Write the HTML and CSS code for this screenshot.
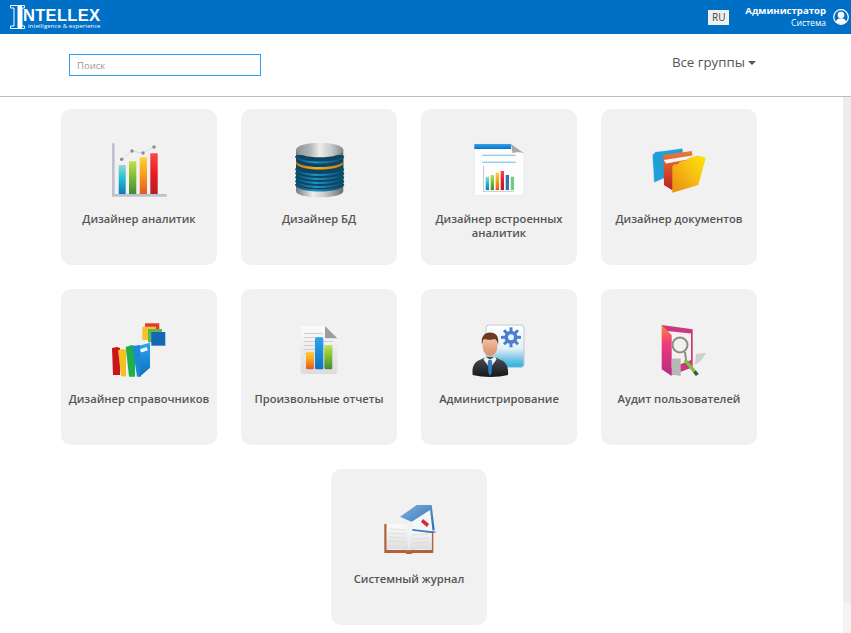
FILE: index.html
```html
<!DOCTYPE html>
<html lang="ru">
<head>
<meta charset="utf-8">
<title>Intellex</title>
<link rel="stylesheet" href="styles.css">
</head>
<body>
<svg class="defs" width="0" height="0" aria-hidden="true">
  <defs>
    <linearGradient id="teal" x1="0" y1="0" x2="0" y2="1"><stop offset="0" stop-color="#8fdcd8"/><stop offset=".5" stop-color="#1fb9d0"/><stop offset="1" stop-color="#1279b8"/></linearGradient>
    <linearGradient id="green" x1="0" y1="0" x2="0" y2="1"><stop offset="0" stop-color="#bfe04a"/><stop offset=".5" stop-color="#7fb92f"/><stop offset="1" stop-color="#3f8a3a"/></linearGradient>
    <linearGradient id="orange" x1="0" y1="0" x2="0" y2="1"><stop offset="0" stop-color="#ffd03a"/><stop offset=".5" stop-color="#f79a1c"/><stop offset="1" stop-color="#df5a22"/></linearGradient>
    <linearGradient id="red" x1="0" y1="0" x2="0" y2="1"><stop offset="0" stop-color="#f9474c"/><stop offset=".5" stop-color="#e81c22"/><stop offset="1" stop-color="#b01f24"/></linearGradient>
    <linearGradient id="blue" x1="0" y1="0" x2="0" y2="1"><stop offset="0" stop-color="#2aa5ee"/><stop offset="1" stop-color="#0f6fc0"/></linearGradient>
    <linearGradient id="silver" x1="0" y1="0" x2="1" y2="0"><stop offset="0" stop-color="#77797b"/><stop offset=".35" stop-color="#ececec"/><stop offset=".6" stop-color="#cccccc"/><stop offset="1" stop-color="#6b6d70"/></linearGradient>
    <linearGradient id="disc" x1="0" y1="0" x2="1" y2="0"><stop offset="0" stop-color="#8d8f91"/><stop offset=".3" stop-color="#b4b5b6"/><stop offset=".5" stop-color="#ededed"/><stop offset=".75" stop-color="#c6c7c8"/><stop offset="1" stop-color="#85878a"/></linearGradient>
    <linearGradient id="steel" x1="0" y1="0" x2="1" y2="0"><stop offset="0" stop-color="#0b4d72"/><stop offset=".4" stop-color="#1f93c0"/><stop offset="1" stop-color="#0b4c6e"/></linearGradient>
    <linearGradient id="amber" x1="0" y1="0" x2="1" y2="0"><stop offset="0" stop-color="#c97a08"/><stop offset=".45" stop-color="#f8ae1c"/><stop offset="1" stop-color="#c97a08"/></linearGradient>
    <linearGradient id="folder" x1="0" y1="1" x2="1" y2="0"><stop offset="0" stop-color="#ea8a10"/><stop offset=".6" stop-color="#f8c414"/><stop offset="1" stop-color="#ffe600"/></linearGradient>
    <linearGradient id="ember" x1="0" y1="0" x2="0" y2="1"><stop offset="0" stop-color="#ee7a34"/><stop offset="1" stop-color="#b81f22"/></linearGradient>
    <linearGradient id="pink" x1="0" y1="0" x2="0" y2="1"><stop offset="0" stop-color="#f78a3a"/><stop offset=".35" stop-color="#ee3c7c"/><stop offset="1" stop-color="#b42a86"/></linearGradient>
    <linearGradient id="paper" x1="0" y1="0" x2="0" y2="1"><stop offset="0" stop-color="#fbfbfb"/><stop offset="1" stop-color="#dcdcdc"/></linearGradient>
    <linearGradient id="sky" x1="0" y1="0" x2="0" y2="1"><stop offset="0" stop-color="#ffffff"/><stop offset=".55" stop-color="#e4f1f8"/><stop offset=".8" stop-color="#7cc4e4"/><stop offset="1" stop-color="#1eb4e4"/></linearGradient>
    <linearGradient id="suit" x1="0" y1="0" x2="0" y2="1"><stop offset="0" stop-color="#4a4e54"/><stop offset="1" stop-color="#16181b"/></linearGradient>
    <linearGradient id="skin" x1="0" y1="0" x2="0" y2="1"><stop offset="0" stop-color="#f6c8a6"/><stop offset="1" stop-color="#d98e68"/></linearGradient>
    <linearGradient id="cover" x1="0" y1="0" x2="1" y2="1"><stop offset="0" stop-color="#7fb0dc"/><stop offset="1" stop-color="#2a6cb4"/></linearGradient>
  </defs>
</svg>

<header class="topbar">
  <a class="logo" href="#">
    <svg class="logo-mark" viewBox="0 0 15 24" width="15" height="24">
      <path d="M.5.5H14.500V3H12V21H14.500V23.500H.5V21H4V3H.5z" fill="none" stroke="#fff" stroke-width="1"/>
      <rect x="7.500" y="0" width="4.500" height="24" fill="#fff"/>
    </svg>
    <span class="logo-text">
      <span class="logo-name">NTELLEX</span>
      <span class="logo-tag">intelligence &amp; experience</span>
    </span>
  </a>
  <div class="user-area">
    <button class="lang">RU</button>
    <div class="user">
      <span class="user-name">Администратор</span>
      <span class="user-role">Система</span>
    </div>
    <svg class="avatar" viewBox="0 0 16 16" width="16" height="16">
      <circle cx="8" cy="8" r="7.300" fill="none" stroke="#fff" stroke-width="1.200"/>
      <circle cx="8" cy="6" r="3.300" fill="#fff"/>
      <path d="M2.700 12.800c.8-2.700 2.800-3.600 5.300-3.600s4.500.9 5.300 3.600A7 7 0 0 1 8 15a7 7 0 0 1-5.300-2.200z" fill="#fff"/>
    </svg>
  </div>
</header>

<section class="toolbar">
  <input class="search" type="text" placeholder="Поиск">
  <div class="groups">Все группы<span class="caret"></span></div>
</section>

<div class="body-row">
  <main class="tiles">
    <a class="tile" href="#">
      <svg class="tile-icon" viewBox="0 0 60 60">
        <rect x="3" y="3.300" width="2.700" height="53.400" fill="#c0c1d0"/>
        <rect x="3" y="54" width="54.700" height="2.700" fill="#c0c1d0"/>
        <rect x="9.700" y="25" width="7" height="29" fill="url(#teal)"/>
        <rect x="20" y="21.300" width="7.300" height="32.700" fill="url(#green)"/>
        <rect x="30.700" y="17.300" width="7.300" height="36.700" fill="url(#orange)"/>
        <rect x="41.300" y="13.300" width="7.400" height="40.700" fill="url(#red)"/>
        <polyline points="12.700,19.300 23,11 34,13 45,7" fill="none" stroke="#d4d4d8" stroke-width=".8"/>
        <g fill="#8a8a90"><circle cx="12.700" cy="19.300" r="1.700"/><circle cx="23" cy="11" r="1.700"/><circle cx="34" cy="13" r="1.700"/><circle cx="45" cy="7" r="1.700"/></g>
      </svg>
      <span class="tile-label">Дизайнер аналитик</span>
    </a>
    <a class="tile" href="#">
      <svg class="tile-icon" viewBox="0 0 60 60">
        <path d="M7 10v41c0 4 10.600 6.300 23.600 6.300S54.300 55 54.300 51V10z" fill="url(#silver)"/>
        <path d="M7 15h47.300v29c0 4-10.600 6.500-23.700 6.500S7 48 7 44z" fill="#0c4563"/>
        <g fill="none" stroke="url(#steel)" stroke-width="2">
          <path d="M7 28.500c0 4 10.600 6.500 23.600 6.500s23.700-2.500 23.700-6.500"/>
          <path d="M7 32.500c0 4 10.600 6.500 23.600 6.500s23.700-2.500 23.700-6.500"/>
          <path d="M7 36.500c0 4 10.600 6.500 23.600 6.500s23.700-2.500 23.700-6.500"/>
          <path d="M7 40.500c0 4 10.600 6.500 23.600 6.500s23.700-2.500 23.700-6.500"/>
          <path d="M7 44c0 4 10.600 6.500 23.600 6.500s23.700-2.500 23.700-6.500"/>
          <path d="M7 16c0 4 10.600 6.500 23.600 6.500s23.700-2.500 23.700-6.500"/>
        </g>
        <path d="M7 20.500c0 4 10.600 6.500 23.600 6.500s23.700-2.500 23.700-6.500v2.500c0 4-10.600 6.500-23.700 6.500S7 27 7 23z" fill="url(#amber)"/>
        <ellipse cx="30.650" cy="10" rx="23.650" ry="7.300" fill="url(#disc)"/>
      </svg>
      <span class="tile-label">Дизайнер БД</span>
    </a>
    <a class="tile" href="#">
      <svg class="tile-icon" viewBox="0 0 60 60">
        <path d="M5.300 4H42l13 9.300v42H5.300z" fill="#fdfdfd" stroke="#e0e0e0" stroke-width=".5"/>
        <rect x="5.300" y="4" width="36.700" height="5" fill="url(#blue)"/>
        <path d="M42 4l13 9.300c-4-1.500-9-1-11.500 0z" fill="#a8a8a8"/>
        <rect x="13.300" y="14.600" width="33.400" height="1.400" fill="#8fd0f0"/>
        <rect x="13.300" y="21.600" width="33.400" height="1.400" fill="#8fd0f0"/>
        <rect x="14" y="26" width="1" height="25.700" fill="#c8c8cc"/>
        <rect x="14" y="50.800" width="31" height="1" fill="#c8c8cc"/>
        <rect x="16.700" y="36.700" width="3.300" height="13.300" fill="url(#teal)"/>
        <rect x="21.700" y="35" width="3.300" height="15" fill="url(#green)"/>
        <rect x="26.700" y="32.700" width="3.300" height="17.300" fill="url(#orange)"/>
        <rect x="31.700" y="31" width="3.300" height="19" fill="url(#red)"/>
        <rect x="36.700" y="35" width="3.300" height="15" fill="#3a6fb0"/>
        <rect x="41.700" y="36.700" width="3.300" height="13.300" fill="#6ed07e"/>
      </svg>
      <span class="tile-label">Дизайнер встроенных аналитик</span>
    </a>
    <a class="tile" href="#">
      <svg class="tile-icon" viewBox="0 0 60 60">
        <path d="M3.300 15l3.400-3.300 9.300-1 17-2.400 1 1.700v20L5 42.700z" fill="#1f9ed8" stroke="#d8eef8" stroke-width=".6"/>
        <path d="M14.300 15L42.700 11 44 18 23 50 15 45z" fill="url(#ember)"/>
        <path d="M14.800 20l37.900-6v3L17 23.500z" fill="#f4f4f4"/>
        <path d="M23.300 26.700l1.500-2 5-1 .5-1.700 8-2 .500-1.500 10-3 8 2.200L49.300 45l-26 7.700z" fill="url(#folder)"/>
      </svg>
      <span class="tile-label">Дизайнер документов</span>
    </a>

    <a class="tile" href="#">
      <svg class="tile-icon" viewBox="0 0 60 60">
        <rect x="36" y="3.300" width="14.300" height="10" fill="#e23a2c"/>
        <rect x="33.300" y="6.700" width="13.700" height="13.300" fill="#f7c22e"/>
        <rect x="39" y="9" width="14" height="13.300" fill="#5cb848"/>
        <rect x="42.300" y="12" width="14" height="13.700" fill="#1668b4"/>
        <path d="M3 28l5-1 3 1v27H4z" fill="#c8161c"/>
        <path d="M9 30l5-1 3 1v26.700l-5-.7z" fill="#f7c01e"/>
        <path d="M16.700 27l6-2 3.300 1v30.700h-6z" fill="#20b04a"/>
        <path d="M23.500 26l7.500-1 1 31.700-4 0z" fill="#1e88d8"/>
        <path d="M31 25.500l10-2.800v25L31 56.500z" fill="url(#blue)"/>
        <rect x="31.500" y="28" width="7" height="3.500" rx=".5" fill="#ffffff" transform="rotate(-18 35 30)"/>
      </svg>
      <span class="tile-label">Дизайнер справочников</span>
    </a>
    <a class="tile" href="#">
      <svg class="tile-icon" viewBox="0 0 60 60">
        <path d="M11.700 6H36l12.300 12.300V52a2 2 0 0 1-2 2H13.700a2 2 0 0 1-2-2z" fill="url(#paper)"/>
        <path d="M36 6l12.300 12.300H36z" fill="#9c9c9c"/>
        <g fill="#cfcfcf">
          <rect x="15" y="13" width="19" height="1"/><rect x="15" y="17" width="19" height="1"/><rect x="15" y="21" width="29" height="1"/><rect x="15" y="25" width="29" height="1"/><rect x="15" y="29" width="29" height="1"/><rect x="15" y="33" width="29" height="1"/>
        </g>
        <rect x="17" y="31.700" width="8" height="17.600" rx="1.500" fill="url(#orange)"/>
        <rect x="26" y="17.300" width="8.300" height="32" rx="1.500" fill="url(#blue)"/>
        <rect x="35.300" y="25.700" width="8" height="23.600" rx="1.500" fill="url(#green)"/>
      </svg>
      <span class="tile-label">Произвольные отчеты</span>
    </a>
    <a class="tile" href="#">
      <svg class="tile-icon" viewBox="0 0 60 60">
        <rect x="17" y="5" width="38" height="42.300" rx="3" fill="url(#sky)" stroke="#c4c8cc" stroke-width="1"/>
        <g fill="#4a7fd0">
          <circle cx="42" cy="17.300" r="6.500"/>
          <g stroke="#4a7fd0" stroke-width="3">
            <line x1="42" y1="7.300" x2="42" y2="27.300"/><line x1="32" y1="17.300" x2="52" y2="17.300"/><line x1="35" y1="10.300" x2="49" y2="24.300"/><line x1="49" y1="10.300" x2="35" y2="24.300"/>
          </g>
        </g>
        <circle cx="42" cy="17.300" r="3" fill="#e8f2f8"/>
        <path d="M3.700 55c-1-7 1-13 7-15l6-3 9 0 6 3c6 2 8 8 7.300 15-10 2.500-25 2.500-35.300 0z" fill="url(#suit)"/>
        <path d="M16 36.500l5 3 5-3 1.500 3-6.500 9-6.500-9z" fill="#f0f0f0"/>
        <path d="M19.500 40h3l.800 3-.8 10-1.500 3-1.500-3-.8-10z" fill="#2a7cc4"/>
        <ellipse cx="21" cy="26" rx="7.500" ry="10" fill="url(#skin)"/>
        <path d="M13 25c-1.500-9 3-12.500 8-12.500 6 0 9.500 4 8 12.500-.5-3-1.500-5-3-6-3 1-8 1-10.500 0-1.500 1-2 3-2.500 6z" fill="#6a3a22"/>
      </svg>
      <span class="tile-label">Администрирование</span>
    </a>
    <a class="tile" href="#">
      <svg class="tile-icon" viewBox="0 0 60 60">
        <path d="M47 34c3-1 7-1 10-1-2 5-6 9-11 12z" fill="#cfcfcf"/>
        <path d="M12.700 5l31 4.300v38l-21 8z" fill="#c83a80"/>
        <path d="M18 11l24 2.500V40l-20 8z" fill="#f6f0ee"/>
        <path d="M12.700 5l10 10v41l-10-6.700z" fill="url(#pink)"/>
        <path d="M22.700 38.500h9v17.500l-9-1.500z" fill="#b8b8b8"/>
        <circle cx="31" cy="25" r="7.500" fill="#eef0f0" fill-opacity=".7" stroke="#8c8c8c" stroke-width="2"/>
        <line x1="36" y1="32" x2="37" y2="40" stroke="#8a8a8a" stroke-width="2"/>
        <line x1="36" y1="40" x2="48" y2="54.500" stroke="#7cc040" stroke-width="3.500"/>
        <line x1="45.500" y1="51.500" x2="48.300" y2="55" stroke="#3c5a3c" stroke-width="3.500"/>
      </svg>
      <span class="tile-label">Аудит пользователей</span>
    </a>

    <a class="tile" href="#">
      <svg class="tile-icon" viewBox="0 0 60 60">
        <path d="M5.300 24h2.400v26h21v0h3v0h21v-24h1.600v27H33.500l-1 1h-5l-1-1H5.300z" fill="#b0623a"/>
        <path d="M7.700 24.500c8-.8 16-.5 21.600 1.500v24.500c-6-2-14-2-21.600-.7z" fill="url(#paper)"/>
        <path d="M52.700 27.500c-8-1-17-.5-22.500 1v22c6-2 15-2 22.500-.7z" fill="url(#paper)"/>
        <g stroke="#d4d4d4" stroke-width=".6">
          <line x1="10" y1="29" x2="27" y2="30"/><line x1="10" y1="33" x2="27" y2="34"/><line x1="10" y1="37" x2="27" y2="38"/><line x1="10" y1="41" x2="27" y2="42"/>
          <line x1="33" y1="35" x2="50" y2="34"/><line x1="33" y1="39" x2="50" y2="38"/><line x1="33" y1="43" x2="50" y2="42"/>
        </g>
        <path d="M21 16.700L37.700 5h15l3 25H45L32.700 21.700z" fill="url(#cover)"/>
        <path d="M32.700 21.700L51 10l2.700 21.700-19.400-2.400z" fill="#f4f6f8"/>
        <path d="M44 19l6 5-2 3-6-5z" fill="#d8283a"/>
        <path d="M32.700 29l25 2.700-4 1.500-20-2.500z" fill="#3a78c0"/>
      </svg>
      <span class="tile-label">Системный журнал</span>
    </a>
  </main>
  <div class="rail"><div class="rail-thumb"></div></div>
</div>
</body>
</html>
```

FILE: styles.css
```css
* { box-sizing: border-box; }

html, body {
  margin: 0;
  height: 100%;
}

body {
  display: flex;
  flex-direction: column;
  overflow: hidden;
  background: #fff;
  font-family: "Open Sans", "Liberation Sans", sans-serif;
  color: #555;
}

.defs { position: absolute; }

.topbar {
  flex: none;
  height: 34px;
  background: #0070c6;
  color: #fff;
  display: flex;
  align-items: center;
  justify-content: space-between;
  padding: 0 2px 0 10px;
}

.logo {
  display: flex;
  align-items: center;
  color: #fff;
  text-decoration: none;
}

.logo-mark { display: block; flex: none; }

.logo-text {
  display: flex;
  flex-direction: column;
  margin-top: 2px;
  margin-left: -2px;
}

.logo-name {
  font-family: "Liberation Sans", sans-serif;
  font-weight: 700;
  font-size: 16.5px;
  line-height: 15px;
  letter-spacing: .3px;
}

.logo-tag {
  font-family: "Open Sans", sans-serif;
  font-size: 6px;
  line-height: 6px;
  letter-spacing: .1px;
  padding-left: 5px;
  white-space: nowrap;
}

.user-area {
  display: flex;
  align-items: center;
}

.lang {
  width: 21px;
  height: 15px;
  padding: 0;
  border: 0;
  background: #f0f0f0;
  color: #444;
  font: 10px/15px "Open Sans", sans-serif;
  margin-right: 16px;
}

.user {
  display: flex;
  flex-direction: column;
  align-items: flex-end;
  margin-right: 7px;
}

.user-name {
  font-weight: 700;
  font-size: 9.600px;
  line-height: 13px;
  white-space: nowrap;
}

.user-role {
  font-size: 8.600px;
  line-height: 13px;
}

.avatar { display: block; }

.toolbar {
  flex: none;
  height: 63px;
  border-bottom: 1px solid #bdbdbd;
  display: flex;
  align-items: flex-start;
  justify-content: space-between;
  padding: 20px 95px 0 69px;
}

.search {
  width: 192px;
  height: 22px;
  border: 1px solid #2f9ff0;
  padding: 0 7px;
  outline: 0;
  font: 9.500px "Open Sans", sans-serif;
  color: #555;
}

.search::placeholder {
  color: #999;
  opacity: 1;
}

.groups {
  font-size: 13.300px;
  line-height: 18px;
  margin-top: -1px;
  color: #555;
  display: flex;
  align-items: center;
}

.caret {
  width: 0;
  height: 0;
  margin-left: 3px;
  margin-top: 2px;
  border-left: 4px solid transparent;
  border-right: 4px solid transparent;
  border-top: 4px solid #555;
}

.body-row {
  flex: 1;
  min-height: 0;
  display: flex;
  justify-content: space-between;
}

.tiles {
  width: 696px;
  margin-left: 61px;
  padding-top: 12px;
  display: flex;
  flex-wrap: wrap;
  justify-content: center;
  align-content: flex-start;
  gap: 24px;
}

.tile {
  width: 156px;
  height: 156px;
  padding: 31px 6px 0;
  border-radius: 10px;
  background: #f1f1f1;
  color: #555;
  text-decoration: none;
  display: flex;
  flex-direction: column;
  align-items: center;
}

.tile-icon {
  flex: none;
  display: block;
  width: 60px;
  height: 60px;
  filter: blur(.35px);
}

.tile-label {
  margin-top: 12px;
  font-size: 11.200px;
  font-weight: 600;
  line-height: 14px;
  text-align: center;
}

.rail {
  width: 8px;
  background: #f3f3f3;
}

.rail-thumb {
  height: 505px;
  background: #ececec;
}
```
